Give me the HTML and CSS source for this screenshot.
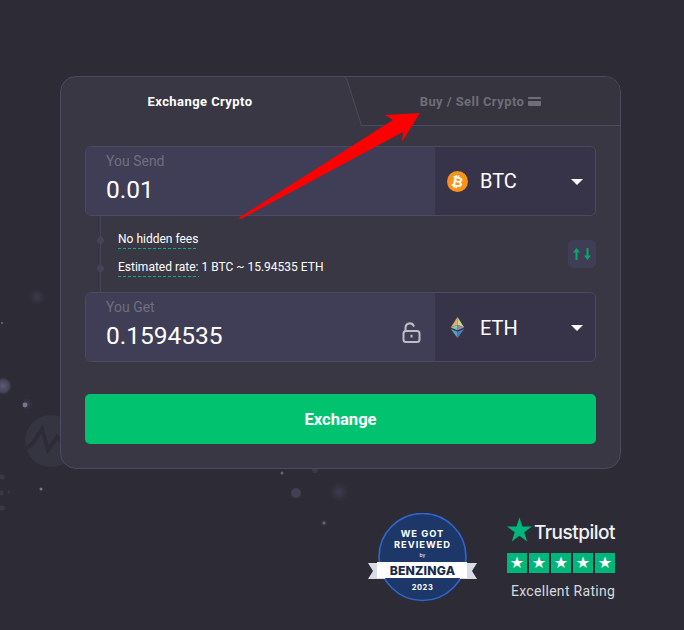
FILE: index.html
```html
<!DOCTYPE html>
<html lang="en">
<head>
<meta charset="utf-8">
<title>Exchange Crypto</title>
<link rel="stylesheet" href="styles.css">
</head>
<body>
<div class="page">
  <svg class="backdrop" width="684" height="630" viewBox="0 0 684 630" aria-hidden="true">
    <defs>
      <radialGradient id="orb"><stop offset="0" stop-color="#5c5b78"/><stop offset=".7" stop-color="#4a4961" stop-opacity=".8"/><stop offset="1" stop-color="#3a3949" stop-opacity="0"/></radialGradient>
      <radialGradient id="faint"><stop offset="0" stop-color="#43425a" stop-opacity=".75"/><stop offset="1" stop-color="#3a3949" stop-opacity="0"/></radialGradient>
    </defs>
    <circle cx="37" cy="297" r="8" fill="url(#faint)"/>
    <circle cx="3" cy="386" r="9" fill="url(#orb)"/>
    <circle cx="27" cy="404" r="6" fill="url(#faint)"/>
    <circle cx="25" cy="405" r="2.4" fill="#77768a"/>
    <circle cx="2" cy="323" r="1" fill="#6a6980"/>
    <circle cx="41" cy="489" r="1.5" fill="#77768a"/>
    <circle cx="2" cy="477" r="2.5" fill="#3a394b"/>
    <circle cx="1" cy="493" r="2.5" fill="#3a394b"/>
    <circle cx="9" cy="492" r="1.5" fill="#3a394b"/>
    <circle cx="2" cy="508" r="2.5" fill="#3a394b"/>
    <circle cx="296" cy="493" r="5" fill="#403f54"/>
    <circle cx="339" cy="492" r="10" fill="url(#faint)"/>
    <circle cx="324" cy="523" r="4" fill="url(#faint)"/>
    <circle cx="324" cy="523" r="1.5" fill="#66657a"/>
    <circle cx="282" cy="473" r="1.5" fill="#66657a"/>
    <circle cx="315" cy="470" r="3" fill="#3a394b"/>
    <circle cx="51" cy="441" r="26" fill="#353441"/>
    <path d="M26 449l7-6 9-14 6 21 9-13 8 9 14-7" fill="none" stroke="#2d2c36" stroke-width="4"/>
  </svg>

  <main class="card">
    <div class="tabs">
      <button class="tab tab-active">Exchange Crypto</button>
      <button class="tab tab-muted">
        Buy / Sell Crypto
        <svg class="tab-icon" width="13" height="9" viewBox="0 0 13 9"><path d="M1 0h11a1 1 0 0 1 1 1v1H0V1a1 1 0 0 1 1-1z" fill="#6e6d78"/><path d="M0 4h13v4a1 1 0 0 1-1 1H1a1 1 0 0 1-1-1z" fill="#6e6d78"/></svg>
      </button>
      <svg class="tab-edge" width="24" height="51" viewBox="0 0 24 51"><path d="M0 0H2Q5 .5 6 4L20.5 50H0Z" fill="#383743"/><path d="M0 .5H2Q5 .5 6 4L20.5 49.5H24" fill="none" stroke="#4b4a61"/></svg>
    </div>

    <div class="body">
      <div class="field">
        <div class="amount">
          <span class="label">You Send</span>
          <span class="value">0.01</span>
        </div>
        <div class="coin">
          <svg class="coin-icon" width="21" height="21" viewBox="0 0 21 21"><circle cx="10.5" cy="10.5" r="10.5" fill="#f7931a"/><text class="btc-mark" x="10.5" y="15.5" text-anchor="middle" transform="rotate(12 10.5 10.5)">₿</text></svg>
          <span class="ticker">BTC</span>
          <span class="caret"></span>
        </div>
      </div>

      <div class="info">
        <ul class="facts">
          <li class="fact"><span class="dashed">No hidden fees</span></li>
          <li class="fact"><span class="dashed">Estimated rate:</span> 1 BTC ~ 15.94535 ETH</li>
        </ul>
        <button class="swap" aria-label="Swap">
          <svg width="18" height="12" viewBox="0 0 18 12"><path d="M3.5 0 7 4.500H4.500V12h-2V4.500H0z" fill="#0aa866"/><path d="M13.500 0h2v7.500H18L14.500 12 11 7.500h2.500z" fill="#0aa866"/></svg>
        </button>
      </div>

      <div class="field field-get">
        <div class="amount">
          <span class="label">You Get</span>
          <span class="value">0.1594535</span>
          <svg class="lock" width="19" height="21" viewBox="0 0 19 21"><path d="M3.500 9V5.500a4.300 4.300 0 0 1 8.200-1.600" fill="none" stroke="#bdbdc4" stroke-width="2" stroke-linecap="round"/><rect x="1.500" y="9" width="16" height="11" rx="2.500" fill="none" stroke="#bdbdc4" stroke-width="2"/><path d="M9.500 12.800v2.800" stroke="#bdbdc4" stroke-width="2"/></svg>
        </div>
        <div class="coin">
          <svg class="coin-icon" width="21" height="21" viewBox="0 0 14 22"><path d="M7 0 0 11l7-3z" fill="#e8a87c"/><path d="M7 0l7 11-7-3z" fill="#c9d97f"/><path d="M0 11l7-3v6z" fill="#7ecb9a"/><path d="M14 11 7 8v6z" fill="#9a7fc0"/><path d="M0 12.500 7 22v-6.500z" fill="#5ba0c8"/><path d="M14 12.500 7 22v-6.500z" fill="#4a7eb8"/></svg>
          <span class="ticker">ETH</span>
          <span class="caret"></span>
        </div>
      </div>

      <button class="submit">Exchange</button>
    </div>
  </main>

  <footer class="badges">
    <svg class="benzinga" width="110" height="90" viewBox="0 0 110 90" role="img" aria-label="Benzinga review badge">
      <circle cx="54.500" cy="44" r="43.500" fill="#1c3768" stroke="#2f66d0" stroke-width="1.600"/>
      <path d="M0 50 17 50V66H0L5 58Z" fill="#d8dce6"/>
      <path d="M109 50H92V66H109L104 58Z" fill="#d8dce6"/>
      <rect x="9" y="49" width="90" height="16" fill="#fff"/>
      <text class="bz-head" x="54.500" y="24" text-anchor="middle">WE GOT</text>
      <text class="bz-head" x="54.500" y="35" text-anchor="middle">REVIEWED</text>
      <text class="bz-by" x="54.500" y="44" text-anchor="middle">by</text>
      <text class="bz-name" x="54.500" y="61.500" text-anchor="middle">BENZINGA</text>
      <text class="bz-year" x="54.500" y="76.500" text-anchor="middle">2023</text>
    </svg>
    <div class="trust">
      <div class="trust-brand">
        <svg width="26" height="25" viewBox="0 0 26 25"><path d="M13 0l3.100 9.500H26l-8 5.800 3 9.700-8-6-8 6 3-9.700-8-5.800h9.900z" fill="#00b67a"/></svg>
        <span class="trust-name">Trustpilot</span>
      </div>
      <div class="stars">
        <span class="star">★</span><span class="star">★</span><span class="star">★</span><span class="star">★</span><span class="star">★</span>
      </div>
      <div class="trust-caption">Excellent Rating</div>
    </div>
  </footer>

  <svg class="arrow" width="684" height="630" viewBox="0 0 684 630" aria-hidden="true"><path d="M238.500 218 393 120 385 115 420 113 402 142 403 132 241 219z" fill="#ff0000"/></svg>
</div>
</body>
</html>
```

FILE: styles.css
```css
* { box-sizing: border-box; }
html, body { margin: 0; padding: 0; }
body {
  width: 684px;
  height: 630px;
  overflow: hidden;
  background: #2c2b35;
  font-family: Roboto, "Liberation Sans", sans-serif;
  color: #fff;
}
button { font-family: inherit; border: 0; padding: 0; color: inherit; }
.page {
  position: relative;
  width: 684px;
  height: 630px;
  padding: 76px 63px 0 60px;
  background: #2d2c36;
}
.backdrop, .arrow { position: absolute; left: 0; top: 0; pointer-events: none; }
.card {
  position: relative;
  width: 561px;
  height: 393px;
  background: #383743;
  border: 1px solid #4b4a61;
  border-radius: 16px;
}
.tabs { position: relative; display: flex; height: 49px; }
.tab {
  display: flex;
  align-items: center;
  justify-content: center;
  font-size: 13px;
  font-weight: 700;
  letter-spacing: 0.43px;
  background: none;
}
.tab-active { width: 284px; padding: 0 6px 0 0; color: #fff; }
.tab-muted {
  flex: 1;
  gap: 4px;
  padding: 1px 4px 0 0;
  color: #6e6d78;
  background: #35343f;
  border-bottom: 1px solid #4b4a61;
  border-radius: 0 15px 0 0;
}
.tab-edge { position: absolute; left: 280px; top: -1px; }
.body { padding: 20px 24px 0; }
.field {
  display: flex;
  height: 70px;
  border: 1px solid #4b4a61;
  border-radius: 6px;
  overflow: hidden;
}
.amount {
  position: relative;
  display: flex;
  flex-direction: column;
  width: 349px;
  padding: 6px 0 0 20px;
  background: #3f3e56;
}
.label { font-size: 14px; line-height: 17px; color: #6f6e7c; }
.value { margin-top: 5px; font-size: 24.5px; line-height: 30px; color: #fff; }
.lock { position: absolute; right: 14px; top: 29px; }
.coin {
  display: flex;
  align-items: center;
  flex: 1;
  padding-left: 12px;
  background: #37344a;
}
.field-get .coin { padding-top: 1px; }
.coin-icon { flex: none; }
.btc-mark { font-size: 14px; font-weight: 700; fill: #fff; font-family: "DejaVu Sans", sans-serif; }
.ticker { margin-left: 12px; font-size: 20px; line-height: 24px; color: #fff; }
.caret {
  margin: 1px 12px 0 auto;
  width: 0;
  height: 0;
  border-left: 6px solid transparent;
  border-right: 6px solid transparent;
  border-top: 6px solid #fff;
}
.info {
  position: relative;
  display: flex;
  justify-content: space-between;
  align-items: center;
  height: 76px;
  padding-left: 15px;
}
.info::before {
  content: "";
  position: absolute;
  left: 15px;
  top: 0;
  bottom: 0;
  width: 1px;
  background: #44435a;
}
.facts { list-style: none; margin: 0; padding: 0 0 0 18px; }
.fact {
  position: relative;
  font-size: 12px;
  line-height: 14px;
  height: 28px;
  padding-top: 6px;
  color: #fff;
}
.fact::before {
  content: "";
  position: absolute;
  left: -21px;
  top: 11px;
  width: 7px;
  height: 7px;
  border-radius: 50%;
  background: #44435a;
}
.dashed {
  display: inline-block;
  padding-bottom: 3px;
  background: repeating-linear-gradient(90deg, #14ad88 0 3px, transparent 3px 5px) left bottom / 100% 1px no-repeat;
}
.swap {
  display: flex;
  align-items: center;
  justify-content: center;
  width: 28px;
  height: 28px;
  border-radius: 5px;
  background: #3f3e56;
}
.submit {
  display: block;
  width: 511px;
  height: 50px;
  margin-top: 32px;
  border-radius: 5px;
  background: #00c26f;
  color: #fff;
  font-size: 16.6px;
  font-weight: 700;
}
.badges {
  position: absolute;
  left: 368px;
  top: 513px;
  display: flex;
  gap: 29px;
}
.benzinga { display: block; }
.bz-head { font: 700 9.3px "Inter", sans-serif; letter-spacing: 1px; fill: #fff; }
.bz-by { font: 400 5px "Inter", sans-serif; fill: #fff; }
.bz-name { font: 800 12.2px "Inter", sans-serif; letter-spacing: 0.2px; fill: #1c2a4a; }
.bz-year { font: 700 7.5px "Inter", sans-serif; letter-spacing: 0.6px; fill: #fff; }
.trust { display: flex; flex-direction: column; width: 108px; }
.trust-brand { display: flex; align-items: flex-end; height: 26px; margin-top: 3px; }
.trust-name { margin: 0 0 -2px 2px; font: 500 19px/22px Inter, sans-serif; letter-spacing: -0.5px; color: #f1f1f3; }
.stars { display: flex; gap: 2px; margin-top: 11px; }
.star {
  display: flex;
  align-items: center;
  justify-content: center;
  width: 20px;
  height: 20px;
  background: #00b67a;
  color: #fff;
  font: 16px/20px "DejaVu Sans", sans-serif;
}
.trust-caption { margin-top: 10px; padding-left: 4px; text-align: center; white-space: nowrap; font: 400 14px/17px Roboto, sans-serif; letter-spacing: 0.3px; color: #d9d9dd; }
```
